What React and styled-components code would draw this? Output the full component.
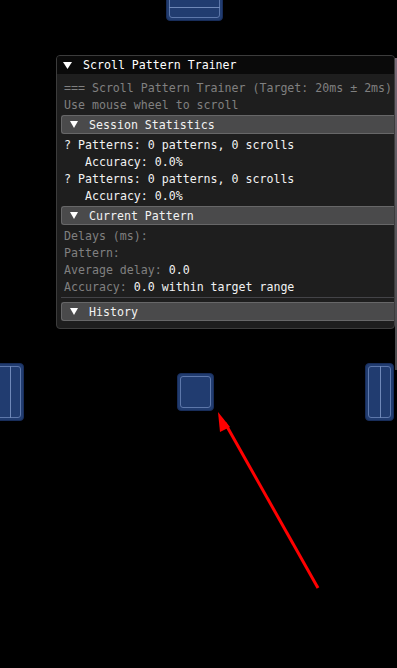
import React from "react";
import styled, { createGlobalStyle } from "styled-components";

const Global = createGlobalStyle`
  html, body { margin: 0; padding: 0; background: #000; }
  body { font-family: "DejaVu Sans Mono", "Liberation Mono", monospace; }
`;

const Canvas = styled.div`
  position: relative;
  width: 397px;
  height: 668px;
  overflow: hidden;
  background: #000;
`;

const Tile = styled.div`
  position: absolute;
  box-sizing: border-box;
  background: #213c70;
  border: 1px solid #182d5a;
  border-radius: 4px;
  &::before {
    content: "";
    position: absolute;
    inset: 2px;
    border: 1px solid #5d77aa;
    border-radius: 3px;
  }
`;

const TileLineV = styled.div`
  position: absolute;
  top: 2px;
  bottom: 2px;
  width: 1px;
  background: #6f88b8;
`;

const TileLineH = styled.div`
  position: absolute;
  left: 2px;
  right: 2px;
  height: 1px;
  background: #6f88b8;
`;

const Strip = styled.div`
  position: absolute;
  left: 395px;
  top: 58px;
  width: 2px;
  height: 312px;
  background: linear-gradient(#7a6b78, #5d5a60 40%, #4a4a4e);
`;

const Window = styled.div`
  position: absolute;
  left: 56px;
  top: 55px;
  width: 339px;
  box-sizing: border-box;
  border: 1px solid #3c3c3c;
  border-radius: 4px;
  background: #1e1e1e;
  overflow: hidden;
  font-size: 11.6px;
  color: #fff;
`;

const TitleBar = styled.div`
  height: 18px;
  background: #0a0a0a;
  display: flex;
  align-items: center;
  padding-left: 6px;
  gap: 11px;
  white-space: pre;
`;

const Tri = styled.svg`
  flex: none;
  display: block;
`;

const Body = styled.div`
  display: flex;
  flex-direction: column;
  gap: 4px;
  padding: 7px 0 7px 4px;
`;

const Row = styled.div`
  height: 13px;
  line-height: 15px;
  padding-left: ${(p) => 3 + (p.$indent ? 21 : 0)}px;
  white-space: pre;
  color: ${(p) => (p.$dim ? "#808080" : "#f2f2f2")};
`;

const Dim = styled.span`
  color: #808080;
`;

const Header = styled.div`
  height: 19px;
  box-sizing: border-box;
  background: #4a4a4b;
  border: 1px solid #676768;
  border-right: none;
  border-radius: 3px 0 0 3px;
  display: flex;
  align-items: center;
  padding-left: 8px;
  gap: 11px;
  white-space: pre;
  color: #f2f2f2;
`;

const Separator = styled.div`
  height: 1px;
  background: #444448;
`;

const Triangle = ({ w = 8, h = 7 }) => (
  <Tri width={w} height={h} viewBox={`0 0 ${w} ${h}`}>
    <polygon points={`0,0 ${w},0 ${w / 2},${h}`} fill="#fff" />
  </Tri>
);

export default function App() {
  return (
    <Canvas>
      <Global />
      <Tile style={{ left: 166, top: -20, width: 57, height: 41 }}>
        <TileLineH style={{ top: 26 }} />
      </Tile>
      <Tile style={{ left: -20, top: 363, width: 44, height: 58 }}>
        <TileLineV style={{ left: 29 }} />
      </Tile>
      <Tile style={{ left: 365, top: 363, width: 29, height: 58 }}>
        <TileLineV style={{ left: 14 }} />
      </Tile>
      <Tile style={{ left: 177, top: 373, width: 37, height: 38 }} />

      <svg
        width="397"
        height="668"
        style={{ position: "absolute", left: 0, top: 0, pointerEvents: "none" }}
      >
        <line x1="318" y1="588" x2="225" y2="423" stroke="#ff0000" strokeWidth="3" />
        <polygon points="218,412 230,427 220,432" fill="#ff0000" />
      </svg>

      <Strip />

      <Window>
        <TitleBar>
          <Triangle w={9} h={7} />
          <span>Scroll Pattern Trainer</span>
        </TitleBar>
        <Body>
          <Row $dim>=== Scroll Pattern Trainer (Target: 20ms ± 2ms)</Row>
          <Row $dim>Use mouse wheel to scroll</Row>
          <Header>
            <Triangle />
            <span>Session Statistics</span>
          </Header>
          <Row>? Patterns: 0 patterns, 0 scrolls</Row>
          <Row $indent>Accuracy: 0.0%</Row>
          <Row>? Patterns: 0 patterns, 0 scrolls</Row>
          <Row $indent>Accuracy: 0.0%</Row>
          <Header>
            <Triangle />
            <span>Current Pattern</span>
          </Header>
          <Row $dim>Delays (ms):</Row>
          <Row $dim>Pattern:</Row>
          <Row>
            <Dim>Average delay: </Dim>0.0
          </Row>
          <Row>
            <Dim>Accuracy: </Dim>0.0 within target range
          </Row>
          <Separator />
          <Header>
            <Triangle />
            <span>History</span>
          </Header>
        </Body>
      </Window>
    </Canvas>
  );
}
